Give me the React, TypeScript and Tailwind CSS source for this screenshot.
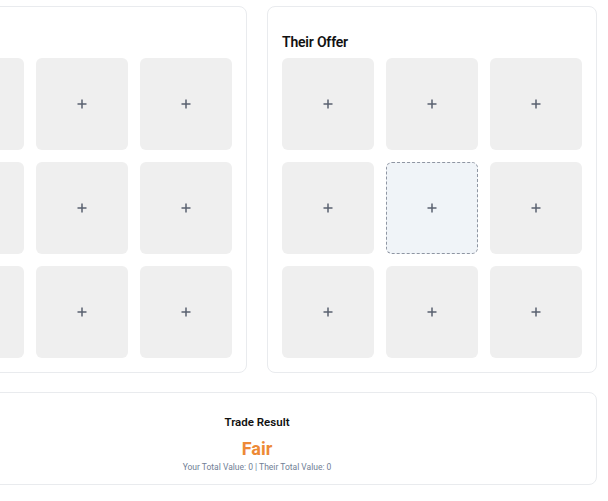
import React from "react";

const font = { fontFamily: "Roboto, 'Liberation Sans', Arial, sans-serif" };

function Plus() {
  return (
    <svg width="10" height="10" viewBox="0 0 10 10" className="text-[#5a6170]">
      <path d="M5 0.5v9M0.5 5h9" stroke="currentColor" strokeWidth="1.5" />
    </svg>
  );
}

function Slot({ active }: { active?: boolean }) {
  return (
    <button
      className={`aspect-square rounded-md flex items-center justify-center ${
        active
          ? "bg-[#f0f4f8] border border-dashed border-[#8f96a3]"
          : "bg-[#efefef]"
      }`}
    >
      <Plus />
    </button>
  );
}

function OfferPanel({ title, activeIndex }: { title: string; activeIndex?: number }) {
  return (
    <div className="bg-white border border-[#e9ebee] rounded-lg px-[14px] pt-[25px] pb-[14px]">
      <h2 className="text-[14px] leading-[20px] font-semibold tracking-[-0.2px] text-[#111] mb-[6px]">
        {title}
      </h2>
      <div className="grid grid-cols-3 gap-3">
        {Array.from({ length: 9 }).map((_, i) => (
          <Slot key={i} active={i === activeIndex} />
        ))}
      </div>
    </div>
  );
}

export default function App() {
  return (
    <div className="min-h-screen bg-white pt-[6px] overflow-hidden" style={font}>
      <div className="w-[680px] ml-[-83px]">
        <div className="grid grid-cols-2 gap-5">
          <OfferPanel title="Your Offer" />
          <OfferPanel title="Their Offer" activeIndex={4} />
        </div>

        {/* Result */}
        <div className="mt-[19px] bg-white border border-[#e9ebee] rounded-lg pt-[21px] pb-[11px] flex flex-col items-center">
          <h3 className="text-[11.5px] leading-[16px] font-semibold text-[#111]">Trade Result</h3>
          <div className="mt-[8px] text-[18px] leading-[22px] font-bold text-[#ed8936]">Fair</div>
          <p className="mt-[1px] text-[8.5px] leading-[12px] text-[#718096]">
            Your Total Value: 0 | Their Total Value: 0
          </p>
        </div>
      </div>
    </div>
  );
}
